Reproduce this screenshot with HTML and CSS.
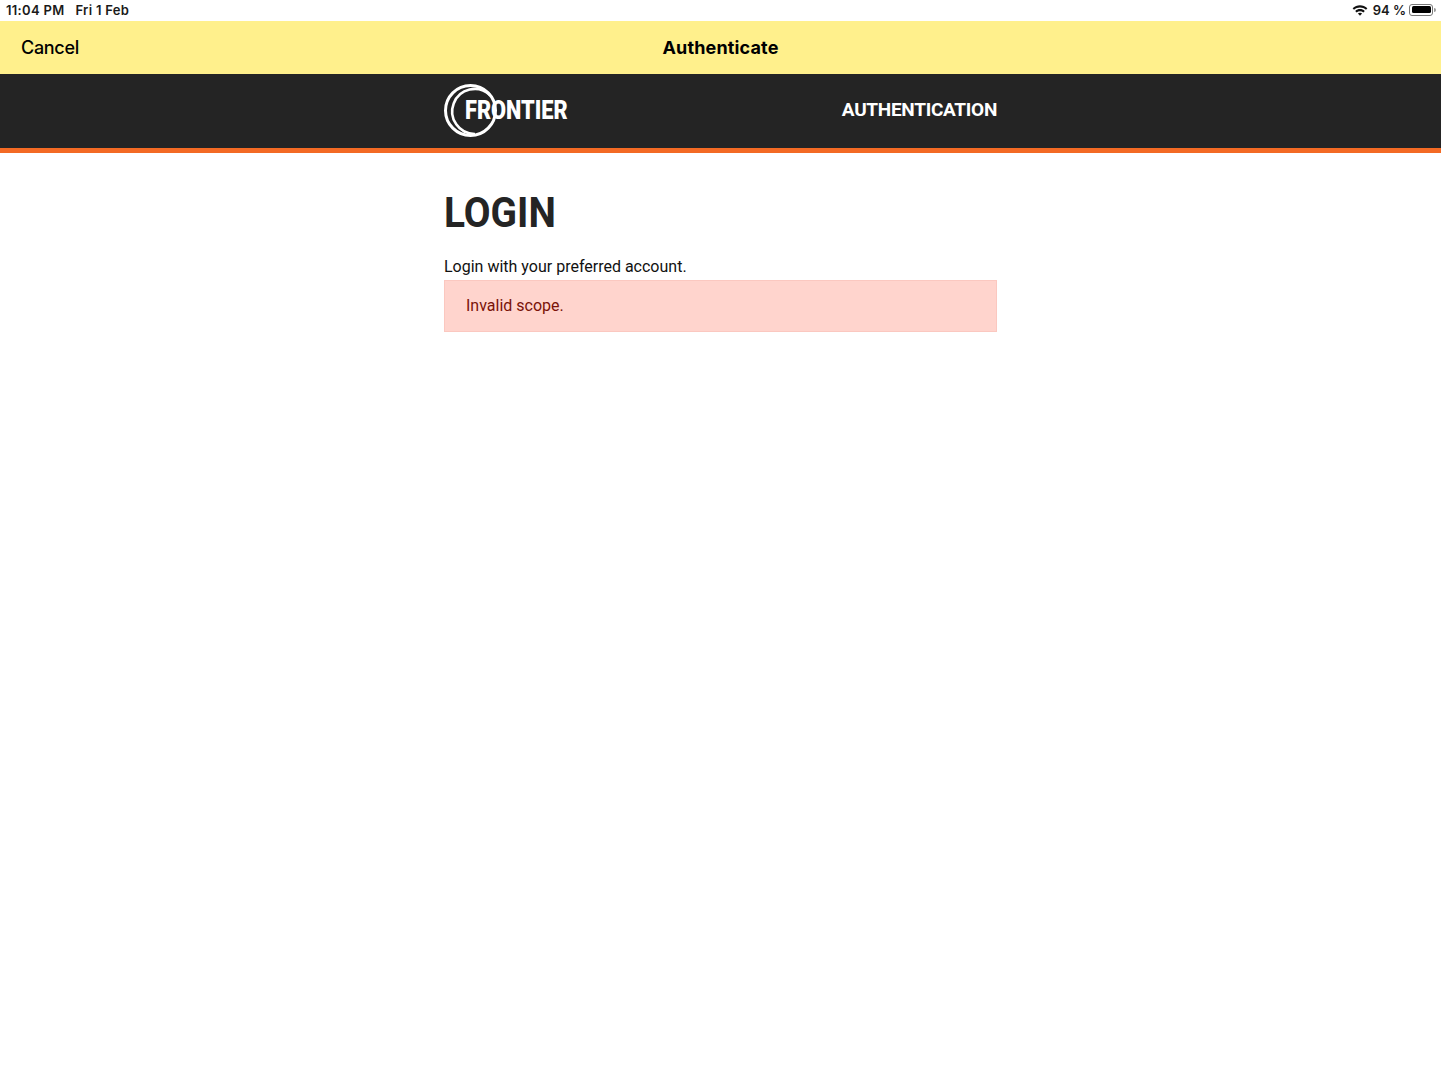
FILE: index.html
```html
<!DOCTYPE html>
<html lang="en">

<head>
    <meta charset="UTF-8">
    <meta name="viewport" content="width=device-width, initial-scale=1.0">
    <title>Authenticate</title>
    <link rel="stylesheet" href="styles.css">
</head>

<body>
    <div class="status-bar">
        <div class="status-left">
            <span>11:04 PM</span>
            <span>Fri 1 Feb</span>
        </div>
        <div class="status-right">
            <svg class="wifi" viewBox="0 0 16 12" width="16" height="12">
                <path d="M0.6 4.2C4.8 0.3 11.2 0.3 15.4 4.2L14 5.7C10.6 2.6 5.4 2.6 2 5.7Z" />
                <path d="M3.2 6.9C6 4.4 10 4.4 12.8 6.9L11.4 8.4C9.4 6.7 6.6 6.7 4.6 8.4Z" />
                <path d="M5.900 9.500C7.100 8.600 8.900 8.600 10.100 9.500L8 11.800Z" />
            </svg>
            <span>94 %</span>
            <div class="battery">
                <div class="battery-level"></div>
            </div>
            <div class="battery-cap"></div>
        </div>
    </div>

    <div class="nav-bar">
        <span class="nav-cancel">Cancel</span>
        <span class="nav-title">Authenticate</span>
    </div>

    <header class="site-header">
        <div class="site-header-inner">
            <div class="logo">
                <svg class="logo-ring" viewBox="0 0 54 54" width="54" height="54">
                    <circle cx="26.500" cy="26.500" r="25" fill="none" stroke="#fff" stroke-width="3" />
                    <path d="M46 11A22.500 22.500 0 1 0 31 50" fill="none" stroke="#fff" stroke-width="2.600" />
                </svg>
                <span class="logo-text">FRONTIER</span>
            </div>
            <span class="site-header-title">AUTHENTICATION</span>
        </div>
    </header>

    <main class="content">
        <h1>LOGIN</h1>
        <p class="intro">Login with your preferred account.</p>
        <div class="alert">Invalid scope.</div>
    </main>
</body>

</html>
```

FILE: styles.css
```css
* {
    box-sizing: border-box;
}

body {
    margin: 0;
    background-color: white;
    font-family: "Inter", "Liberation Sans", sans-serif;
    color: #000;
}

.status-bar {
    height: 21px;
    padding: 0 5px 2px 6px;
    display: flex;
    justify-content: space-between;
    align-items: center;
    font-size: 13px;
    font-weight: 600;
    color: #1a1a1a;
}

.status-left {
    display: flex;
    gap: 11px;
    letter-spacing: 0.3px;
}

.status-right {
    display: flex;
    align-items: center;
}

.wifi {
    fill: #111;
    margin-right: 5px;
}

.battery {
    width: 24px;
    height: 12px;
    margin-left: 3px;
    padding: 1.5px;
    border: 1px solid #777;
    border-radius: 3px;
}

.battery-level {
    width: 100%;
    height: 100%;
    background-color: #000;
    border-radius: 1.5px;
}

.battery-cap {
    width: 2px;
    height: 4px;
    margin-left: 1px;
    background-color: #999;
    border-radius: 0 2px 2px 0;
}

.nav-bar {
    height: 53px;
    padding: 0 21px;
    display: grid;
    grid-template-columns: 1fr auto 1fr;
    align-items: center;
    background-color: #fff08c;
    font-size: 18px;
}

.nav-cancel {
    font-weight: 500;
    letter-spacing: -0.3px;
}

.nav-title {
    font-weight: 700;
    letter-spacing: 0.15px;
}

.site-header {
    height: 79px;
    background-color: #242424;
    border-bottom: 5px solid #f36a24;
}

.site-header-inner {
    width: 553px;
    height: 74px;
    margin: 0 auto;
    display: flex;
    justify-content: space-between;
    align-items: center;
}

.logo {
    display: flex;
    align-items: center;
    color: white;
}

.logo-text {
    margin-left: -33px;
    margin-bottom: 2px;
    font-family: "Roboto", "Liberation Sans", sans-serif;
    font-size: 25px;
    font-weight: 900;
    transform: scaleX(0.87);
    transform-origin: left center;
}

.site-header-title {
    margin-bottom: 4px;
    font-family: "Roboto", "Liberation Sans", sans-serif;
    font-size: 19px;
    font-weight: 700;
    letter-spacing: -0.3px;
    color: white;
}

.content {
    width: 553px;
    margin: 0 auto;
}

h1 {
    margin: 36px 0 0;
    font-family: "Roboto", "Liberation Sans", sans-serif;
    font-size: 42px;
    line-height: 48px;
    font-weight: 700;
    color: #242424;
    transform: scaleX(0.925);
    transform-origin: left center;
}

.intro {
    margin: 19px 0 0;
    font-family: "Roboto", "Liberation Sans", sans-serif;
    font-size: 16px;
    line-height: 22px;
    color: #111;
}

.alert {
    height: 52px;
    margin-top: 2px;
    padding: 0 21px 2px;
    display: flex;
    align-items: center;
    background-color: #ffd4cd;
    border: 1px solid #fbc8c0;
    font-family: "Roboto", "Liberation Sans", sans-serif;
    font-size: 16px;
    color: #7a1208;
}
```
